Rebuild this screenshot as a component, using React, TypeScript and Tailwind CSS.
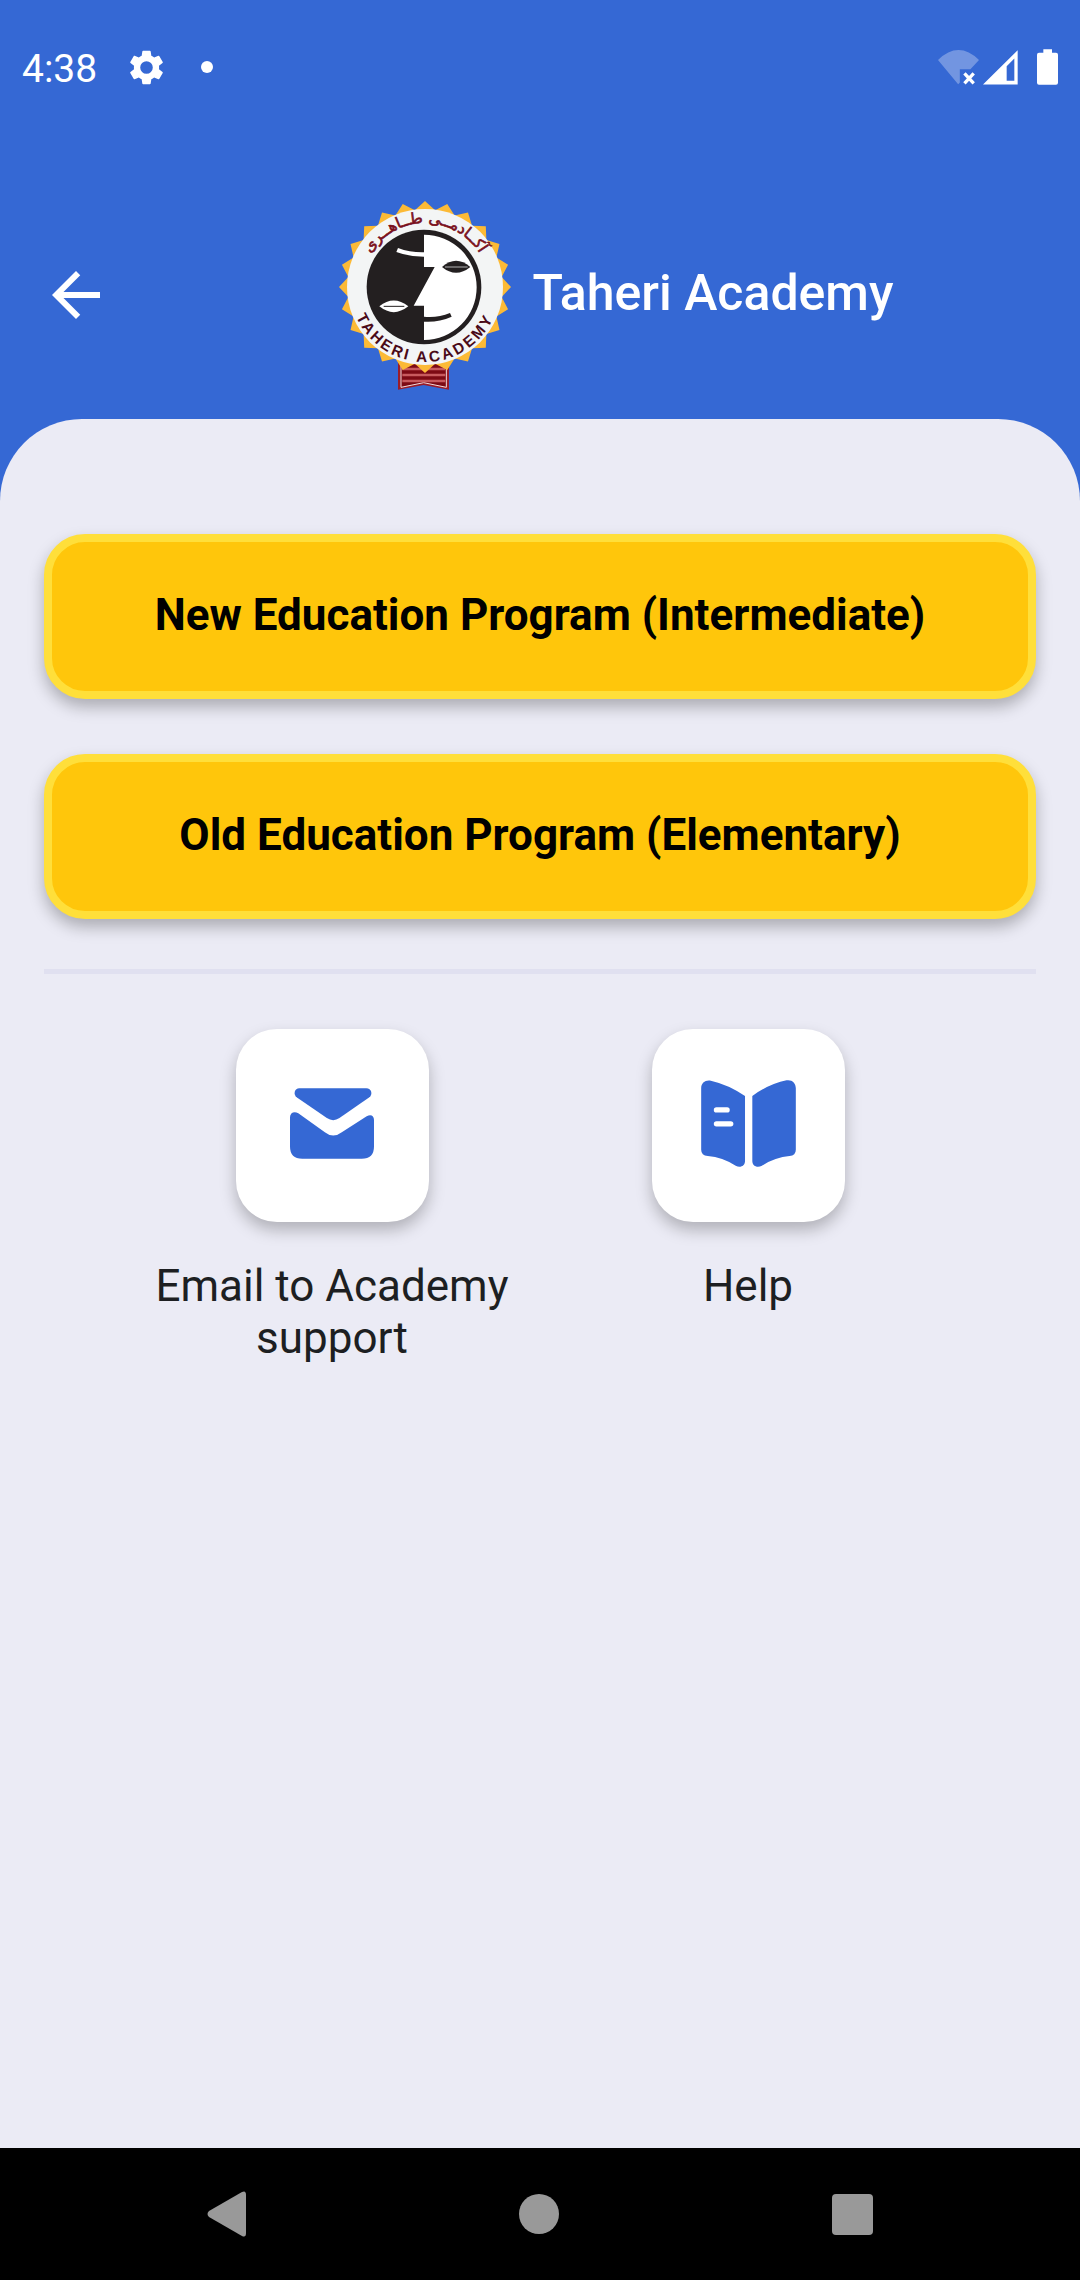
import React from "react";

const sealPoints = Array.from({ length: 48 }, (_, i) => {
  const radius = i % 2 === 0 ? 258 : 232;
  const angle = (i * Math.PI) / 24;
  return `${(312 + radius * Math.sin(angle)).toFixed(1)},${(291 - radius * Math.cos(angle)).toFixed(1)}`;
}).join(" ");

function AcademySeal() {
  return (
    <svg viewBox="54 30 516 570" className="h-[190px] w-[172px] shrink-0" role="img" aria-label="Taheri Academy seal">
      <path d="M231 510H384V599L308 585L231 599Z" fill="#9c1c28" />
      <path d="M240 510H376V592L308 578L240 592Z" fill="#7d0a14" stroke="#f3dcdc" strokeWidth="3" />
      <path d="M244 537H373M244 555H373M244 573H373" stroke="#c85a5e" strokeWidth="8" fill="none" />
      <polygon points={sealPoints} fill="#fcba36" />
      <circle cx="312" cy="291" r="234" fill="#f3f5f5" />
      <circle cx="309" cy="291" r="172" fill="#231f20" />
      <path d="M309 134A157 157 0 0 1 309 450V395Q352 398 392 380L387 369Q350 384 309 380V347H278L341 231H309V200Q262 200 226 186L231 174Q268 188 309 187Z" fill="#fff" />
      <path d="M363 231Q405 194 448 231Q405 266 363 231Z" fill="#231f20" />
      <path d="M372 231H440" stroke="#b5b5b5" strokeWidth="3" />
      <path d="M175 349Q218 314 262 349Q218 384 175 349Z" fill="#fff" />
      <path d="M188 349H250" stroke="#231f20" strokeWidth="3" />
      <path id="seal-top" d="M120 291A192 192 0 0 1 504 291" fill="none" />
      <path id="seal-bottom" d="M87 291A225 225 0 0 0 537 291" fill="none" />
      <text className="font-['DejaVu_Sans',sans-serif] text-[46px]" fill="#7a101c" stroke="#7a101c" strokeWidth="2" textAnchor="middle">
        <textPath href="#seal-top" startOffset="50%">آکــادمــی طــاهــری</textPath>
      </text>
      <text className="font-['Liberation_Sans',sans-serif] text-[46px] font-bold tracking-[8px]" fill="#4a0a18" textAnchor="middle">
        <textPath href="#seal-bottom" startOffset="50%">TAHERI ACADEMY</textPath>
      </text>
    </svg>
  );
}

function StatusBar() {
  return (
    <div className="flex h-[134px] items-center px-[22px] text-white">
      <span className="pt-1 text-[39px] leading-[48px]">4:38</span>
      <svg viewBox="2 2 20 20" className="ml-8 size-[35px]" fill="currentColor" aria-label="Settings">
        <path d="M19.14 12.94c.04-.3.06-.61.06-.94 0-.32-.02-.64-.07-.94l2.03-1.58a.49.49 0 0 0 .12-.61l-1.92-3.32a.488.488 0 0 0-.59-.22l-2.39.96c-.5-.38-1.03-.7-1.62-.94l-.36-2.54a.484.484 0 0 0-.48-.41h-3.84c-.24 0-.43.17-.47.41l-.36 2.54c-.59.24-1.13.57-1.62.94l-2.39-.96c-.22-.08-.47 0-.59.22L2.74 8.87c-.12.21-.08.47.12.61l2.03 1.58c-.05.3-.09.63-.09.94s.02.64.07.94l-2.03 1.58a.49.49 0 0 0-.12.61l1.92 3.32c.12.22.37.29.59.22l2.39-.96c.5.38 1.03.7 1.62.94l.36 2.54c.05.24.24.41.48.41h3.84c.24 0 .44-.17.47-.41l.36-2.54c.59-.24 1.13-.56 1.62-.94l2.39.96c.22.08.47 0 .59-.22l1.92-3.32c.12-.22.07-.47-.12-.61l-2.01-1.58zM12 15.6A3.61 3.61 0 0 1 8.400 12 3.610 3.610 0 0 1 12 8.400 3.610 3.610 0 0 1 15.600 12 3.610 3.610 0 0 1 12 15.600z" />
      </svg>
      <span className="ml-[37px] size-3 rounded-full bg-white" />
      <svg viewBox="114 58 124 107" className="ml-auto h-[36px] w-[41px]" aria-label="Wi-Fi disconnected">
        <path d="M114 90Q176 30 238 90L212 118H180V158L175 164Z" fill="#fff" opacity="0.3" />
        <path d="M194 131L222 161M222 131L194 161" stroke="#fff" strokeWidth="10" />
      </svg>
      <svg viewBox="247 61 105 104" className="ml-1 h-[35px] w-[35px]" aria-label="Signal">
        <path fillRule="evenodd" d="M247 164L351 61V164ZM318 109V153H341V86Z" fill="#fff" />
      </svg>
      <svg viewBox="411 57 63 107" className="ml-[19px] h-[36px] w-[21px]" aria-label="Battery">
        <path d="M430 57H456V68H468Q474 68 474 74V158Q474 164 468 164H417Q411 164 411 158V74Q411 68 417 68H430Z" fill="#fff" />
      </svg>
    </div>
  );
}

function ProgramButton({ children }: { children: React.ReactNode }) {
  return (
    <button
      type="button"
      className="h-[165px] w-full rounded-[41px] border-8 border-[#ffdf3a] bg-[#ffc60b] pb-1 text-[44px] leading-[52px] font-bold text-black shadow-[0_8px_16px_rgba(0,0,0,0.27)]"
    >
      {children}
    </button>
  );
}

function Shortcut({ label, children }: { label: string; children: React.ReactNode }) {
  return (
    <button type="button" className="flex flex-col items-center gap-[38px] text-[44px] leading-[52px] text-[#1d1f22]">
      <span className="flex size-[193px] items-center justify-center rounded-[41px] bg-white pb-1 shadow-[0_8px_16px_rgba(0,0,0,0.25)]">
        {children}
      </span>
      <span>{label}</span>
    </button>
  );
}

export default function App() {
  return (
    <div className="flex min-h-screen flex-col bg-[#3568d4] font-[Roboto,sans-serif]">
      <StatusBar />
      <header className="flex items-center px-10 pt-[66px] pb-[29px]">
        <button type="button" aria-label="Back" className="size-[72px] shrink-0 text-white">
          <svg viewBox="0 0 24 24" className="size-full" fill="currentColor">
            <path d="M20 11H7.830l5.590-5.590L12 4l-8 8 8 8 1.410-1.410L7.830 13H20v-2z" />
          </svg>
        </button>
        <div className="flex grow items-center justify-center gap-[22px] pl-20">
          <AcademySeal />
          <h1 className="pb-1 text-[50px] leading-[60px] font-medium text-white">Taheri Academy</h1>
        </div>
      </header>
      <main className="flex grow flex-col rounded-t-[82px] bg-[#ebebf5] px-11 pt-[115px]">
        <div className="flex flex-col gap-[55px]">
          <ProgramButton>New Education Program (Intermediate)</ProgramButton>
          <ProgramButton>Old Education Program (Elementary)</ProgramButton>
        </div>
        <hr className="mt-[50px] border-t-[5px] border-[#e0e0f0]" />
        <div className="mt-[55px] grid grid-cols-2 items-start px-20">
          <Shortcut label="Email to Academy support">
            <svg viewBox="211 234 253 213" className="h-[71px] w-[84px]" fill="#3568d4">
              <path d="M239 234H441C456 234 462 252 449 262L360 324Q341 337 322 324L232 262C219 252 225 234 239 234Z" />
              <path d="M211 322C211 308 224 303 236 310L316 367Q341 387 367 367L442 319C454 311 464 317 464 330V410Q464 447 427 447H248Q211 447 211 410Z" />
            </svg>
          </Shortcut>
          <Shortcut label="Help">
            <svg viewBox="213 209 285 262" className="h-[87px] w-[95px]">
              <path d="M213 234C213 217 226 208 242 211Q295 223 345 257V453C345 468 330 475 317 467Q277 442 233 438Q213 437 213 419Z" fill="#3568d4" />
              <path d="M367 257Q417 221 470 210C486 207 498 218 498 234V419Q498 437 479 438Q437 441 396 467C382 475 367 468 367 453Z" fill="#3568d4" />
              <path d="M259 299H291M259 341H302" stroke="#fff" strokeWidth="16" strokeLinecap="round" />
            </svg>
          </Shortcut>
        </div>
      </main>
      <nav className="flex h-[132px] items-center justify-between bg-black px-[207px] text-[#999]">
        <button type="button" aria-label="Back">
          <svg viewBox="0 0 39 46" className="h-[46px] w-[39px]" fill="currentColor">
            <path d="M2 20L35 1Q39 -1 39 4V42Q39 47 35 45L2 26Q-1 23 2 20Z" />
          </svg>
        </button>
        <button type="button" aria-label="Home" className="size-10 rounded-full bg-[#999]" />
        <button type="button" aria-label="Recent apps" className="size-[41px] rounded-[4px] bg-[#999]" />
      </nav>
    </div>
  );
}
